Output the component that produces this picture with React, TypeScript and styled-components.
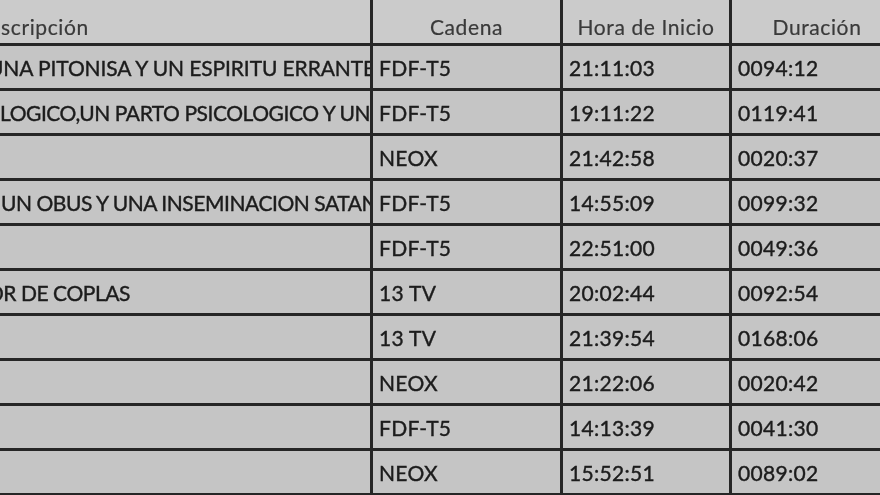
import React from "react";
import styled, { createGlobalStyle } from "styled-components";

const GlobalStyle = createGlobalStyle`
  html, body {
    margin: 0;
    padding: 0;
    background: #c6c6c6;
    overflow: hidden;
  }
  body {
    width: 880px;
    height: 495px;
  }
`;

const Sheet = styled.div`
  width: 880px;
  height: 495px;
  overflow: hidden;
  background: #c6c6c6;
`;

const Grid = styled.div`
  display: grid;
  grid-template-columns: 370px 187px 166px 170px;
  grid-template-rows: 43px repeat(10, 42px) 10px;
  column-gap: 3px;
  row-gap: 3px;
  background: #262626;
  width: 902px;
  font-family: Lato, "Open Sans", sans-serif;
  filter: blur(0.35px);
`;

const HeadCell = styled.div<{ $align?: "left" | "center" }>`
  background: #cbcbcb;
  color: #3a3a3a;
  font-size: 21px;
  letter-spacing: 0.6px;
  -webkit-text-stroke: 0.2px #3a3a3a;
  display: flex;
  align-items: center;
  justify-content: ${(p) => (p.$align === "left" ? "flex-start" : "center")};
  padding-top: 10px;
  box-sizing: border-box;
  overflow: hidden;
  white-space: nowrap;
`;

const Cell = styled.div`
  background: #c5c5c5;
  color: #1c1c1c;
  font-size: 21px;
  letter-spacing: 0.3px;
  -webkit-text-stroke: 0.4px #1c1c1c;
  display: flex;
  align-items: center;
  padding-left: 6px;
  box-sizing: border-box;
  overflow: hidden;
  white-space: nowrap;
`;

const DescCell = styled(Cell)`
  padding-left: 0;
  letter-spacing: -0.45px;
`;

const Clip = styled.span<{ $lead: number; $track?: number }>`
  display: block;
  margin-left: ${(p) => p.$lead}px;
  ${(p) => (p.$track !== undefined ? `letter-spacing: ${p.$track}px;` : "")}
`;

const Filler = styled.div`
  background: #c5c5c5;
`;

type Row = {
  desc: string;
  lead: number;
  track?: number;
  channel: string;
  start: string;
  dur: string;
};

const rows: Row[] = [
  { desc: "UNA PITONISA Y UN ESPIRITU ERRANTE", lead: -12, track: -0.1, channel: "FDF-T5", start: "21:11:03", dur: "0094:12" },
  { desc: "LOGICO,UN PARTO PSICOLOGICO Y UNA FAMILIA", lead: 0, channel: "FDF-T5", start: "19:11:22", dur: "0119:41" },
  { desc: "", lead: 0, channel: "NEOX", start: "21:42:58", dur: "0020:37" },
  { desc: "UN OBUS Y UNA INSEMINACION SATANICA", lead: 1, channel: "FDF-T5", start: "14:55:09", dur: "0099:32" },
  { desc: "", lead: 0, channel: "FDF-T5", start: "22:51:00", dur: "0049:36" },
  { desc: "OR DE COPLAS", lead: -13, channel: "13 TV", start: "20:02:44", dur: "0092:54" },
  { desc: "", lead: 0, channel: "13 TV", start: "21:39:54", dur: "0168:06" },
  { desc: "", lead: 0, channel: "NEOX", start: "21:22:06", dur: "0020:42" },
  { desc: "", lead: 0, channel: "FDF-T5", start: "14:13:39", dur: "0041:30" },
  { desc: "", lead: 0, channel: "NEOX", start: "15:52:51", dur: "0089:02" },
];

export default function App() {
  return (
    <>
      <GlobalStyle />
      <Sheet>
        <Grid>
          <HeadCell $align="left">
            <Clip $lead={-27}>Descripción</Clip>
          </HeadCell>
          <HeadCell>Cadena</HeadCell>
          <HeadCell>Hora de Inicio</HeadCell>
          <HeadCell>Duración</HeadCell>
          {rows.map((r, i) => (
            <React.Fragment key={i}>
              <DescCell>
                <Clip $lead={r.lead} $track={r.track}>{r.desc}</Clip>
              </DescCell>
              <Cell>{r.channel}</Cell>
              <Cell>{r.start}</Cell>
              <Cell>{r.dur}</Cell>
            </React.Fragment>
          ))}
          <Filler />
          <Filler />
          <Filler />
          <Filler />
        </Grid>
      </Sheet>
    </>
  );
}
